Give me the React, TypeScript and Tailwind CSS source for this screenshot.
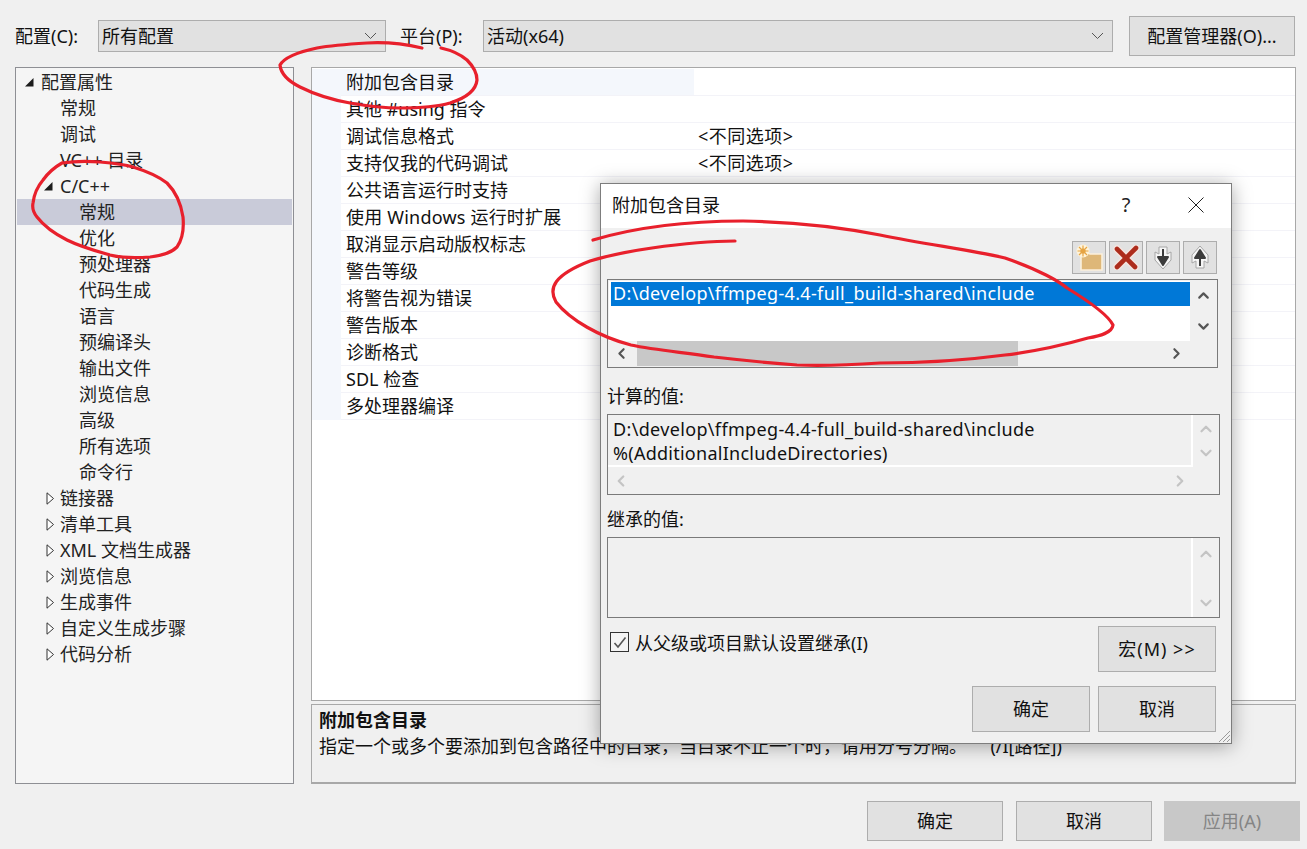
import React from 'react';
import { ChevronDown, ChevronLeft, ChevronRight, ChevronUp } from 'lucide-react';

const treeRows = [
  { label: '配置属性', level: 0, arrow: 'open' },
  { label: '常规', level: 1 },
  { label: '调试', level: 1 },
  { label: 'VC++ 目录', level: 1 },
  { label: 'C/C++', level: 1, arrow: 'open' },
  { label: '常规', level: 2, selected: true },
  { label: '优化', level: 2 },
  { label: '预处理器', level: 2 },
  { label: '代码生成', level: 2 },
  { label: '语言', level: 2 },
  { label: '预编译头', level: 2 },
  { label: '输出文件', level: 2 },
  { label: '浏览信息', level: 2 },
  { label: '高级', level: 2 },
  { label: '所有选项', level: 2 },
  { label: '命令行', level: 2 },
  { label: '链接器', level: 1, arrow: 'closed' },
  { label: '清单工具', level: 1, arrow: 'closed' },
  { label: 'XML 文档生成器', level: 1, arrow: 'closed' },
  { label: '浏览信息', level: 1, arrow: 'closed' },
  { label: '生成事件', level: 1, arrow: 'closed' },
  { label: '自定义生成步骤', level: 1, arrow: 'closed' },
  { label: '代码分析', level: 1, arrow: 'closed' },
];

const levelPadding = ['pl-[7px]', 'pl-[26px]', 'pl-[45px]'];

const gridRows = [
  { name: '附加包含目录', value: '' },
  { name: '其他 #using 指令', value: '' },
  { name: '调试信息格式', value: '<不同选项>' },
  { name: '支持仅我的代码调试', value: '<不同选项>' },
  { name: '公共语言运行时支持', value: '' },
  { name: '使用 Windows 运行时扩展', value: '', wide: true },
  { name: '取消显示启动版权标志', value: '' },
  { name: '警告等级', value: '' },
  { name: '将警告视为错误', value: '' },
  { name: '警告版本', value: '' },
  { name: '诊断格式', value: '' },
  { name: 'SDL 检查', value: '' },
  { name: '多处理器编译', value: '' },
];

const TreeArrow = ({ kind }: { kind?: string }) => (
  <span className="w-[17px] h-[12px] flex items-center shrink-0">
    {kind === 'open' && (
      <svg width="10" height="10" viewBox="0 0 10 10">
        <path d="M9.5 1 L9.5 9.5 L1 9.5 Z" fill="#1c1c1c" />
      </svg>
    )}
    {kind === 'closed' && (
      <svg width="10" height="13" viewBox="0 0 10 13" className="ml-[3px]">
        <path d="M1 .8 L7.5 6.5 L1 12.2 Z" fill="#fff" stroke="#333" strokeWidth="1" />
      </svg>
    )}
  </span>
);

const Button = ({ label, className, disabled }: { label: string; className: string; disabled?: boolean }) => (
  <div
    className={`flex items-center justify-center border ${
      disabled ? 'bg-[#c8c8c8] border-[#c8c8c8] text-[#858585]' : 'bg-[#e1e1e1] border-[#adadad] text-[#111]'
    } ${className}`}
  >
    {label}
  </div>
);

const Combo = ({ label, className }: { label: string; className: string }) => (
  <div className={`h-[32px] bg-[#e1e1e1] border border-[#adadad] flex items-center justify-between pl-[3px] pr-[8px] ${className}`}>
    <span>{label}</span>
    <svg width="13" height="8" viewBox="0 0 13 8">
      <path d="M1 1 L6.5 6.5 L12 1" fill="none" stroke="#555" strokeWidth="1" />
    </svg>
  </div>
);

const ToolButton = ({ children }: { children: React.ReactNode }) => (
  <div className="w-[34px] h-[33px] bg-[#e1e1e1] border border-[#adadad] flex items-center justify-center">{children}</div>
);

const ReadOnlyBox = ({ lines, className }: { lines: string[]; className?: string }) => (
  <div className={`w-[613px] h-[81px] border border-[#7a7a7a] flex ${className ?? ''}`}>
    <div className="flex-1 flex flex-col">
      <div className={`${lines.length ? 'h-[52px] border-b-2 border-white pl-[5px] pt-[2px]' : 'h-full'} leading-[24px] border-r-2 border-r-white`}>
        {lines.map((line, i) => (
          <div key={line} className={i === 0 ? 'tracking-[0.34px]' : 'tracking-[0.26px]'}>{line}</div>
        ))}
      </div>
      {lines.length > 0 && (
        <div className="flex-1 flex items-center justify-between pl-[4px] pr-[4px] text-[#c4c4c4]">
          <ChevronLeft size={18} strokeWidth={3} />
          <ChevronRight size={18} strokeWidth={3} />
        </div>
      )}
    </div>
    <div className={`w-[26px] flex flex-col items-center text-[#c4c4c4] ${lines.length ? 'gap-[6px] pt-[5px]' : 'justify-between pt-[7px] pb-[5px]'}`}>
      <ChevronUp size={18} strokeWidth={3} />
      <ChevronDown size={18} strokeWidth={3} />
    </div>
  </div>
);

const Dialog = () => (
  <div className="absolute left-[600px] top-[183px] w-[632px] h-[561px] bg-[#f0f0f0] border border-[#7d7d7d] shadow-[0_2px_18px_rgba(0,0,0,0.35)] flex flex-col">
    <div className="h-[44px] bg-white flex items-center pl-[11px] pb-[2px] shrink-0">
      <span className="flex-1">附加包含目录</span>
      <span className="w-[20px] text-center text-[#222] text-[20px] mr-[52px]">?</span>
      <svg width="16" height="16" viewBox="0 0 16 16" className="mr-[27px]">
        <path d="M.5 .5 L15.5 15.5 M15.5 .5 L.5 15.5" stroke="#222" strokeWidth="1" />
      </svg>
    </div>
    <div className="flex-1 flex flex-col pl-[6px] relative">
      <div className="mt-[13px] h-[33px] w-[610px] flex justify-end gap-[3px]">
        <ToolButton>
          <svg width="28" height="27" viewBox="0 0 28 27">
            <path d="M6 9 H13 L15 10 H27 V26 H6 Z" fill="#deb778" stroke="#fbf0dc" strokeWidth="1.6" />
            <circle cx="8" cy="7" r="6.5" fill="#fff3d8" />
            <circle cx="8" cy="7" r="2.6" fill="#df9a3a" />
            <path d="M8 1.5 V12.5 M2.5 7 H13.5 M4 3 L12 11 M12 3 L4 11" stroke="#e6a544" strokeWidth="1.2" />
          </svg>
        </ToolButton>
        <ToolButton>
          <svg width="28" height="25" viewBox="0 0 28 25">
            <path d="M5 4 L23 22 M24 3 L5 22" stroke="#f4e4df" strokeWidth="7.5" strokeLinecap="round" />
            <path d="M5 4 L23 22 M24 3 L5 22" stroke="#ad2c1c" strokeWidth="4.6" strokeLinecap="round" />
          </svg>
        </ToolButton>
        <ToolButton>
          <svg width="22" height="25" viewBox="0 0 22 25">
            <path d="M7 2 H15 V9 L19 7 V15 L11 24 L3 15 V7 L7 9 Z" fill="#f6f6f6" stroke="#a6a6a6" strokeWidth="1" strokeLinejoin="round" />
            <path d="M11 4 V18 M6 12 L11 20 L16 12 Z" fill="#3c3c3c" stroke="#3c3c3c" strokeWidth="2" strokeLinejoin="round" />
          </svg>
        </ToolButton>
        <ToolButton>
          <svg width="22" height="25" viewBox="0 0 22 25">
            <path d="M7 23 H15 V16 L19 18 V10 L11 1 L3 10 V18 L7 16 Z" fill="#f6f6f6" stroke="#a6a6a6" strokeWidth="1" strokeLinejoin="round" />
            <path d="M11 21 V7 M6 13 L11 5 L16 13 Z" fill="#3c3c3c" stroke="#3c3c3c" strokeWidth="2" strokeLinejoin="round" />
          </svg>
        </ToolButton>
      </div>
      <div className="mt-[5px] w-[611px] h-[89px] border border-[#7a7a7a] p-px flex flex-col bg-[#f0f0f0]">
        <div className="h-[60px] flex">
          <div className="flex-1 bg-white pt-px pl-[2px]">
            <div className="h-[24px] w-[579px] bg-[#0078d7] text-white pl-[2px] leading-[23px] tracking-[0.34px]">D:\develop\ffmpeg-4.4-full_build-shared\include</div>
          </div>
          <div className="w-[27px] flex flex-col items-center justify-between py-[6px] text-[#555]">
            <ChevronUp size={17} strokeWidth={3} />
            <ChevronDown size={17} strokeWidth={3} />
          </div>
        </div>
        <div className="flex-1 flex items-center text-[#555]">
          <div className="w-[28px] pr-[3px] flex justify-center"><ChevronLeft size={17} strokeWidth={3} /></div>
          <div className="w-[381px] h-full bg-[#c8c8c8]" />
          <div className="flex-1 flex justify-end pr-[31px]"><ChevronRight size={17} strokeWidth={3} /></div>
        </div>
      </div>
      <div className="h-[46px] flex items-center pt-[10px]">计算的值:</div>
      <ReadOnlyBox lines={['D:\\develop\\ffmpeg-4.4-full_build-shared\\include', '%(AdditionalIncludeDirectories)']} />
      <div className="h-[42px] flex items-center pt-[7px]">继承的值:</div>
      <ReadOnlyBox lines={[]} />
      <div className="mt-[8px] flex">
        <div className="flex-1 flex items-start pl-[3px] pt-[6px] gap-[6px]">
          <div className="w-[19px] h-[20px] border border-[#333] bg-[#f4f4f4] flex items-center justify-center">
            <svg width="14" height="13" viewBox="0 0 14 13">
              <path d="M1.5 7 L5 11 L12.5 1.5" fill="none" stroke="#555" strokeWidth="1.6" />
            </svg>
          </div>
          <span className="leading-[22px]">从父级或项目默认设置继承(I)</span>
        </div>
        <Button label="宏(M) >>" className="w-[118px] h-[46px] mr-[15px] tracking-[1px]" />
      </div>
      <div className="mt-[14px] flex justify-end gap-[8px] pr-[15px]">
        <Button label="确定" className="w-[118px] h-[46px]" />
        <Button label="取消" className="w-[118px] h-[46px]" />
      </div>
      <svg width="14" height="14" viewBox="0 0 14 14" className="absolute right-0 bottom-0">
        <path d="M13 2 L2 13 M13 6 L6 13 M13 10 L10 13" stroke="#9a9a9a" strokeWidth="1" />
      </svg>
    </div>
  </div>
);

const RedInk = () => (
  <svg className="absolute inset-0 pointer-events-none" width="1307" height="849" viewBox="0 0 1307 849">
    <g fill="none" stroke="#e8202c" strokeWidth="3.2" strokeLinecap="round" strokeLinejoin="round">
      <path d="M422 48 C405 44 385 42 367 43 C350 44 333 45 317 48 C298 52 284 58 280 65 C281 75 290 82 300 87 C316 95 333 100 350 103 C367 106 384 108 400 108 C418 108 436 107 450 103 C466 98 476 90 477 80 C477 72 473 66 467 60 C460 54 450 50 441 48" />
      <path d="M62 163 C75 161 88 161 100 162 C112 163 123 164 133 167 C146 171 158 176 167 183 C176 192 181 204 183 217 C184 228 182 240 177 247 C170 254 160 256 150 257 C136 258 122 258 110 255 C96 251 81 247 67 240 C55 234 44 226 37 217 C33 212 32 208 33 203 C34 194 38 186 43 180 C48 173 55 167 62 163" />
      <path d="M593 240 C640 226 690 221 743 221 C800 222 850 229 880 235 C930 245 970 250 1005 258 C1040 270 1060 282 1067 288 C1090 302 1108 315 1113 325 C1112 333 1100 336 1088 338 C1060 346 1030 352 1005 355 C960 361 920 363 880 363 C850 365 820 366 797 365 C770 363 740 360 714 357 C680 352 655 350 631 345 C600 337 570 320 556 302 C548 288 554 275 590 261 C610 255 630 251 652 248 C680 244 710 241 735 241" />
    </g>
  </svg>
);

export default function App() {
  return (
    <div className="relative w-[1307px] h-[849px] overflow-hidden bg-[#f0f0f0] text-[18px] text-[#111] font-['Noto_Sans','Noto_Sans_CJK_SC',sans-serif]">
      <div className="h-[67px] pt-[16px] pl-[15px]">
        <div className="h-[40px] flex items-center">
          <span className="w-[83px]">配置(C):</span>
          <Combo label="所有配置" className="w-[288px]" />
          <span className="w-[83px] ml-[14px]">平台(P):</span>
          <Combo label="活动(x64)" className="w-[630px]" />
          <Button label="配置管理器(O)..." className="w-[166px] h-[40px] ml-[16px]" />
        </div>
      </div>

      <div className="flex pl-[15px] gap-[17px]">
        <div className="w-[279px] h-[717px] border border-[#8e8f94] bg-[#f5f5f5] px-px pt-px text-[#222]">
          {treeRows.map((row, i) => (
            <div key={i} className={`h-[26px] flex items-center ${levelPadding[row.level]} ${row.selected ? 'bg-[#c9cbd9]' : ''}`}>
              <TreeArrow kind={row.arrow} />
              <span>{row.label}</span>
            </div>
          ))}
        </div>

        <div className="w-[985px] flex flex-col gap-[3px]">
          <div className="h-[634px] bg-white border border-[#a8a8a8] pt-px overflow-hidden">
            {gridRows.map((row, i) => (
              <div key={row.name} className="h-[27px] flex">
                <div className="w-[29px] shrink-0 bg-[#f4f7fc]" />
                <div className={`w-[353px] pl-[5px] flex items-center border-b border-[#f3f3f8] ${i === 0 ? 'bg-[#f4f7fc]' : ''} ${row.wide ? 'tracking-[0.2px]' : ''}`}>{row.name}</div>
                <div className="flex-1 pl-[4px] flex items-center border-b border-[#f3f3f8] tracking-[0.5px]">{row.value}</div>
              </div>
            ))}
          </div>
          <div className="h-[80px] bg-[#f0f0f0] border border-[#a8a8a8] border-b-2 pl-[7px] pt-[2px] leading-[26px]">
            <div className="font-bold">附加包含目录</div>
            <div className="whitespace-pre">指定一个或多个要添加到包含路径中的目录，当目录不止一个时，请用分号分隔。     (/I[路径])</div>
          </div>
        </div>
      </div>

      <div className="mt-[17px] flex justify-end pr-[7px]">
        <Button label="确定" className="w-[136px] h-[40px] mr-[13px]" />
        <Button label="取消" className="w-[136px] h-[40px] mr-[12px]" />
        <Button label="应用(A)" className="w-[136px] h-[40px]" disabled />
      </div>

      <Dialog />
      <RedInk />
    </div>
  );
}
